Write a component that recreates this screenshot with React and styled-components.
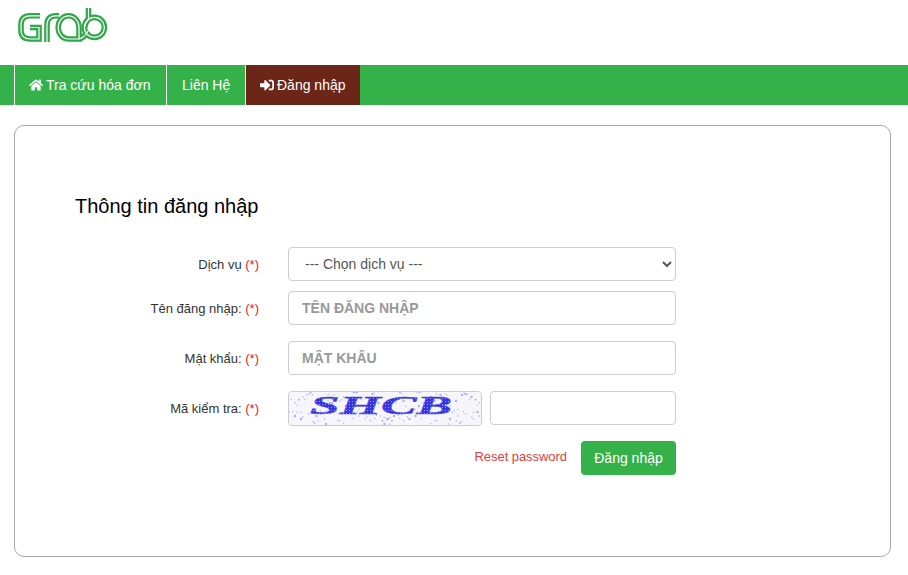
import React from "react";
import styled, { createGlobalStyle } from "styled-components";
import { FaHome, FaSignInAlt } from "react-icons/fa";

const Global = createGlobalStyle`
  html, body { margin: 0; padding: 0; background: #fff; }
  body { font-family: "Liberation Sans", Arial, sans-serif; color: #333; }
  * { box-sizing: border-box; }
`;

const Header = styled.header`
  height: 65px;
  svg { display: block; }
`;

const Nav = styled.nav`
  height: 40px;
  background: #35b14a;
  padding-left: 14px;
  display: flex;
`;

const NavItem = styled.a`
  display: flex;
  align-items: center;
  gap: 3px;
  width: ${p => p.$w}px;
  padding-left: ${p => p.$pl}px;
  border-left: 1px solid #fff;
  background: ${p => (p.$active ? "#6b2617" : "transparent")};
  color: #fff;
  font-size: 14px;
  white-space: nowrap;
  svg { width: 14px; height: 14px; }
`;

const Panel = styled.section`
  margin: 20px 17px 0 14px;
  height: 432px;
  border: 1px solid #a8a8a8;
  border-radius: 10px;
  padding: 68px 0 0 60px;
`;

const Title = styled.h2`
  margin: 0 0 29px;
  font-size: 20px;
  font-weight: 400;
  line-height: 24px;
  color: #000;
`;

const Row = styled.div`
  display: grid;
  grid-template-columns: 184px 388px;
  column-gap: 29px;
  align-items: center;
  margin-bottom: ${p => p.$mb}px;
`;

const Label = styled.label`
  text-align: right;
  font-size: 13px;
  color: #333;
  span { color: #f01818; }
`;

const fieldBase = `
  width: 100%;
  height: 34px;
  border: 1px solid #ccc;
  border-radius: 4px;
  background: #fff;
  font-family: "Liberation Sans", Arial, sans-serif;
  outline: none;
`;

const Select = styled.select`
  ${fieldBase}
  padding: 0 12px;
  font-size: 14px;
  color: #555;
`;

const Input = styled.input`
  ${fieldBase}
  padding: 0 13px;
  font-size: 14px;
  font-weight: 700;
  &::placeholder { color: #999; opacity: 1; }
`;

const CaptchaRow = styled.div`
  display: flex;
  gap: 8px;
  align-items: flex-start;
`;

const Captcha = styled.svg`
  display: block;
  flex: none;
  width: 194px;
  height: 35px;
  border: 1px solid #ccc;
  border-radius: 4px;
  text {
    font-family: "Liberation Serif", serif;
    font-weight: 700;
    font-style: italic;
    font-size: 26px;
    fill: url(#captcha-ink);
    stroke: #4a4ae8;
    stroke-width: 0.5px;
  }
`;

const Actions = styled.div`
  display: flex;
  justify-content: flex-end;
  align-items: center;
  gap: 14px;
  width: 388px;
  margin-left: 213px;
`;

const ResetLink = styled.a`
  font-size: 13px;
  letter-spacing: -0.05px;
  color: #d9433a;
  padding-bottom: 4px;
`;

const Submit = styled.button`
  width: 95px;
  height: 34px;
  border: none;
  border-radius: 4px;
  background: #35b14a;
  color: #fff;
  font-family: inherit;
  font-size: 14px;
`;

// vệt nhiễu của ảnh captcha, cố định để ảnh chụp không đổi
const dots = Array.from({ length: 170 }, (_, i) => ({
  x: (i * 73.7) % 192,
  y: (i * i * 3.1 + i * 11.3) % 33,
  r: i % 5 === 0 ? 1.2 : 0.7,
}));

function Logo() {
  const strokes = (
    <>
      <path d="M40 15.8 H30 Q21 15.8 21 24.8 V30 Q21 39 30 39 H39 V27.5 H30" />
      <path d="M47 42 V25 Q47 15.8 56 15.8 H59" />
      <path d="M79 27.4 A10.4 11.6 0 1 0 68.6 39 H79 Z" />
      <circle cx="94.4" cy="27.4" r="10" />
      <path d="M88.5 8 V19 Q85 23 84.4 28" />
      <path d="M79 39 Q84 38 88 31" />
    </>
  );
  return (
    <svg width="110" height="45" viewBox="0 0 110 45" fill="none" aria-label="Grab">
      <g stroke="#2fa84a" strokeWidth="5.6">{strokes}</g>
      <g stroke="#fff" strokeWidth="1.2">{strokes}</g>
    </svg>
  );
}

export default function App() {
  return (
    <>
      <Global />
      <Header><Logo /></Header>
      <Nav>
        <NavItem $w={152} $pl={14}><FaHome />Tra cứu hóa đơn</NavItem>
        <NavItem $w={79} $pl={15}>Liên Hệ</NavItem>
        <NavItem $w={115} $pl={14} $active><FaSignInAlt />Đăng nhập</NavItem>
      </Nav>
      <Panel>
        <Title>Thông tin đăng nhập</Title>
        <Row $mb={10}>
          <Label>Dịch vụ <span>(*)</span></Label>
          <Select defaultValue="">
            <option value="">--- Chọn dịch vụ ---</option>
          </Select>
        </Row>
        <Row $mb={16}>
          <Label>Tên đăng nhập: <span>(*)</span></Label>
          <Input placeholder="TÊN ĐĂNG NHẬP" />
        </Row>
        <Row $mb={16}>
          <Label>Mật khẩu: <span>(*)</span></Label>
          <Input placeholder="MẬT KHẨU" />
        </Row>
        <Row $mb={15}>
          <Label>Mã kiểm tra: <span>(*)</span></Label>
          <CaptchaRow>
            <Captcha viewBox="0 0 192 33">
              <defs>
                <pattern id="captcha-ink" width="3" height="3" patternUnits="userSpaceOnUse">
                  <rect width="3" height="3" fill="#3434e0" />
                  <rect width="1" height="1" fill="#a0a0f4" />
                </pattern>
              </defs>
              <rect width="192" height="33" fill="#f5f5fa" />
              {dots.map((d, i) => <circle key={i} cx={d.x} cy={d.y} r={d.r} fill="#6a6af0" opacity="0.5" />)}
              <text x="21" y="22" textLength="142" lengthAdjust="spacingAndGlyphs">SHCB</text>
            </Captcha>
            <Input />
          </CaptchaRow>
        </Row>
        <Actions>
          <ResetLink>Reset password</ResetLink>
          <Submit>Đăng nhập</Submit>
        </Actions>
      </Panel>
    </>
  );
}
